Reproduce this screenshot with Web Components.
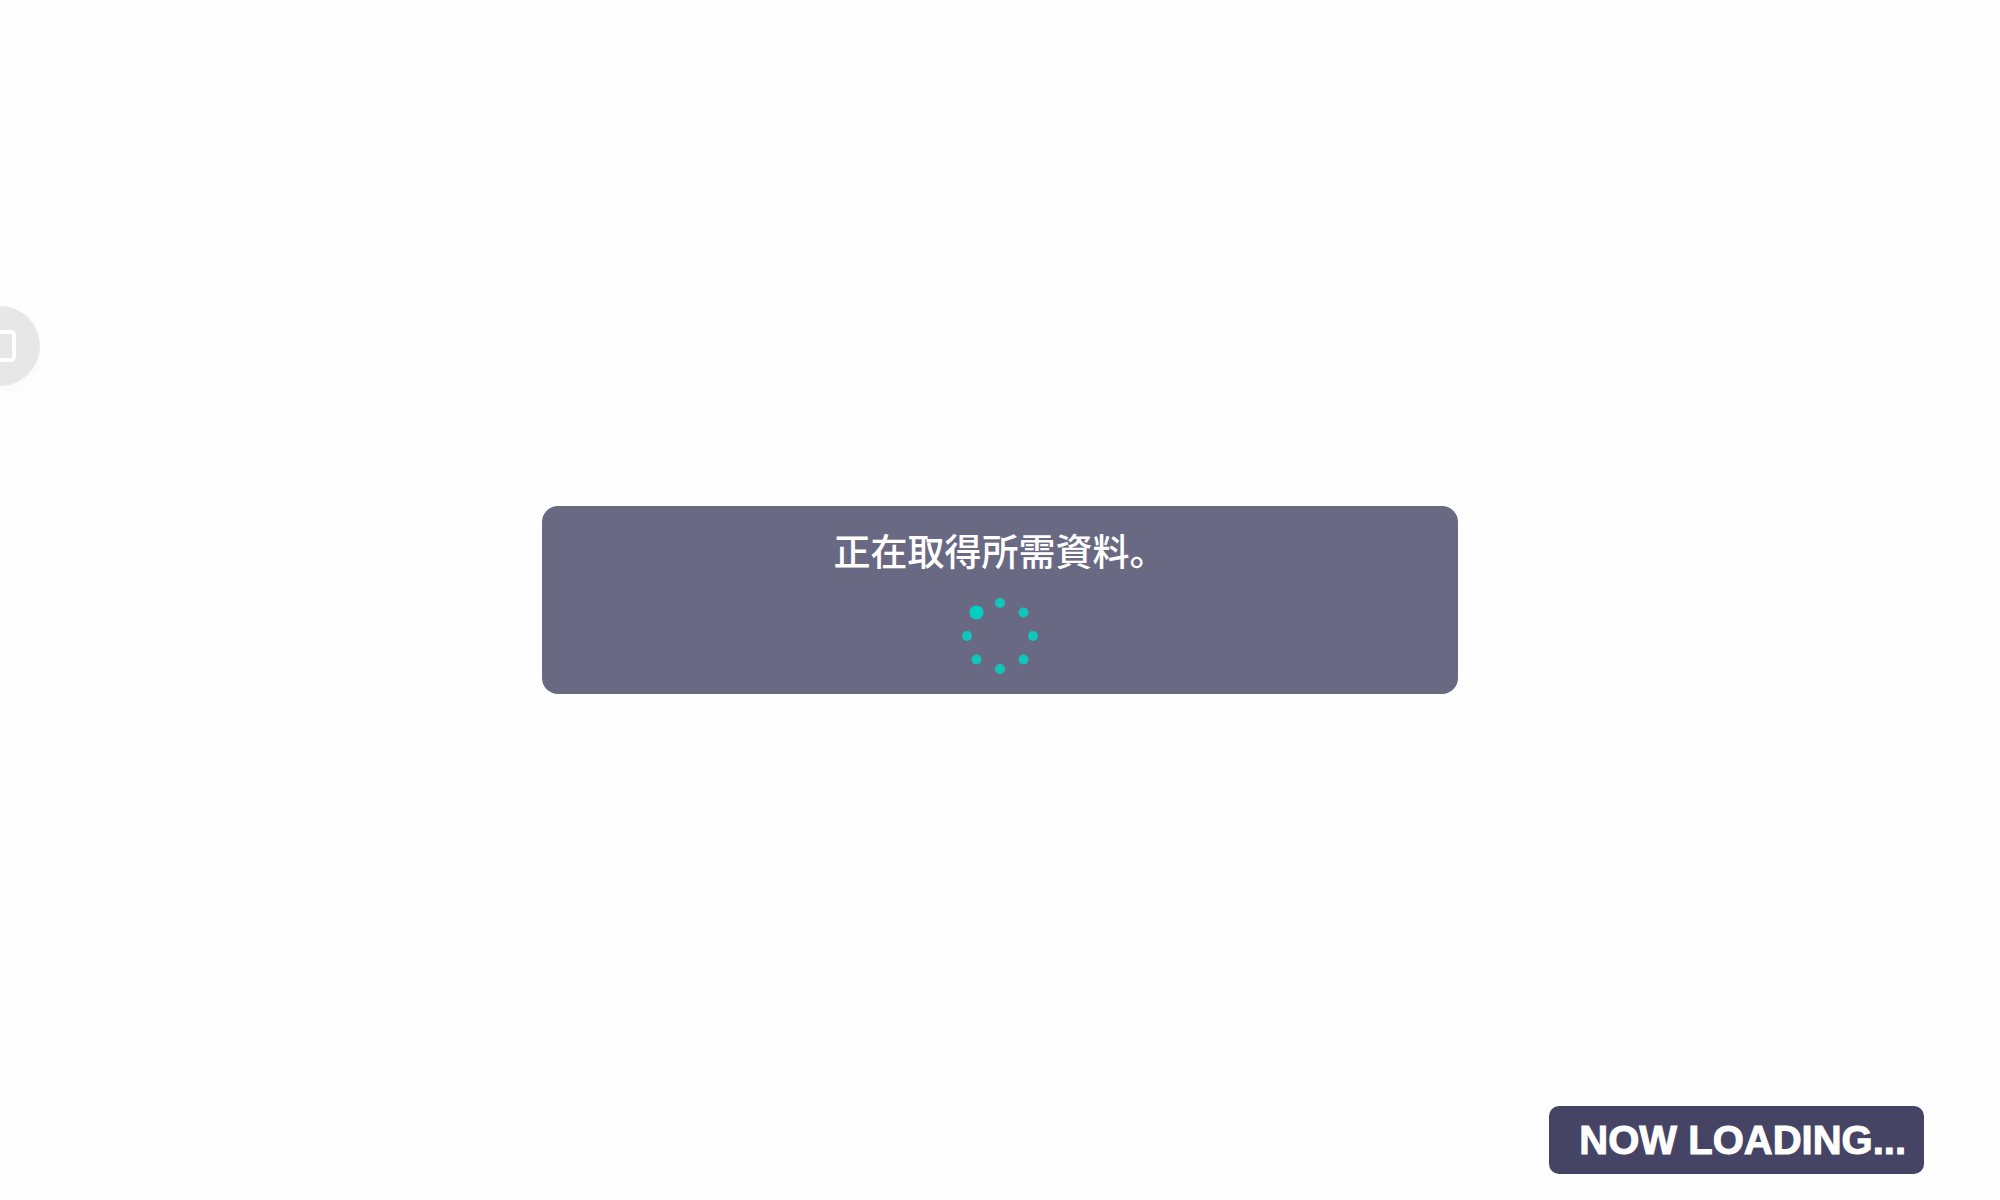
<!DOCTYPE html>
<html lang="ja">
<head>
<meta charset="utf-8">
<meta name="viewport" content="width=device-width, initial-scale=1">
<title>NOW LOADING...</title>
<style>
body { margin: 0; background: #fefefe; font-family: "Noto Sans CJK JP", "Noto Sans", sans-serif; }
</style>
</head>
<body>
<loading-screen>
  <side-toggle slot="side"></side-toggle>
  <status-panel>正在取得所需資料。<dot-spinner slot="spinner"></dot-spinner></status-panel>
  <loading-badge slot="footer">NOW LOADING...</loading-badge>
</loading-screen>
<script>
function define(name, html) {
  const template = document.createElement('template');
  template.innerHTML = html;
  customElements.define(name, class extends HTMLElement {
    constructor() {
      super();
      this.attachShadow({ mode: 'open' }).append(template.content.cloneNode(true));
    }
  });
}

define('loading-screen', `
<style>
:host { display: grid; grid-template-rows: 1fr auto 1fr; min-height: 100vh; overflow: hidden; }
.side { display: flex; align-items: flex-end; padding-bottom: 120px; }
main { display: flex; justify-content: center; padding: 0 16px; }
footer { display: flex; justify-content: flex-end; align-items: flex-end; padding: 0 76px 26px 16px; }
</style>
<div class="side"><slot name="side"></slot></div>
<main><slot></slot></main>
<footer><slot name="footer"></slot></footer>`);

// Round button tucked half way behind the left edge of the window
define('side-toggle', `
<style>
:host { display: block; margin-left: -40px; }
button { display: grid; place-items: center; width: 80px; height: 80px; padding: 0; border: 0;
  border-radius: 50%; background: #e7e7e7; box-shadow: 2px 6px 12px rgb(0 0 0 / 2%); }
svg { display: block; }
</style>
<button type="button" aria-label="Menu">
  <svg width="32" height="32" viewBox="0 0 32 32" fill="none" stroke="#fff" stroke-width="4" aria-hidden="true">
    <rect x="2" y="2" width="28" height="28" rx="3"/>
  </svg>
</button>`);

define('status-panel', `
<style>
:host { display: flex; flex-direction: column; align-items: center; gap: 20px; box-sizing: border-box;
  width: 100%; max-width: 916px; padding: 18px 16px; border-radius: 16px; background: #6a6984; color: #fff; }
p { margin: 0; font-size: 37px; line-height: 52px; font-weight: 500; text-align: center; }
</style>
<p role="status"><slot></slot></p>
<slot name="spinner"></slot>`);

define('dot-spinner', `
<style>
:host { display: block; }
svg { display: block; }
</style>
<svg width="80" height="80" viewBox="-40 -40 80 80" fill="#10c6ba" aria-hidden="true">
  <circle cy="-33" r="5"/>
  <circle cx="23.5" cy="-23.5" r="5"/>
  <circle cx="33" r="5"/>
  <circle cx="23.5" cy="23.5" r="5"/>
  <circle cy="33" r="5"/>
  <circle cx="-23.5" cy="23.5" r="5"/>
  <circle cx="-33" r="5"/>
  <circle cx="-23.5" cy="-23.5" r="7" fill="#03cfbf"/>
</svg>`);

define('loading-badge', `
<style>
:host { display: block; padding: 8px 18px 8px 30px; border-radius: 10px; background: #464465; color: #fff;
  font-family: "Liberation Sans", Arial, sans-serif; font-size: 40px; line-height: 52px; font-weight: 900;
  font-kerning: none; -webkit-text-stroke: 1px currentColor; white-space: nowrap; }
</style>
<slot></slot>`);
</script>
</body>
</html>
